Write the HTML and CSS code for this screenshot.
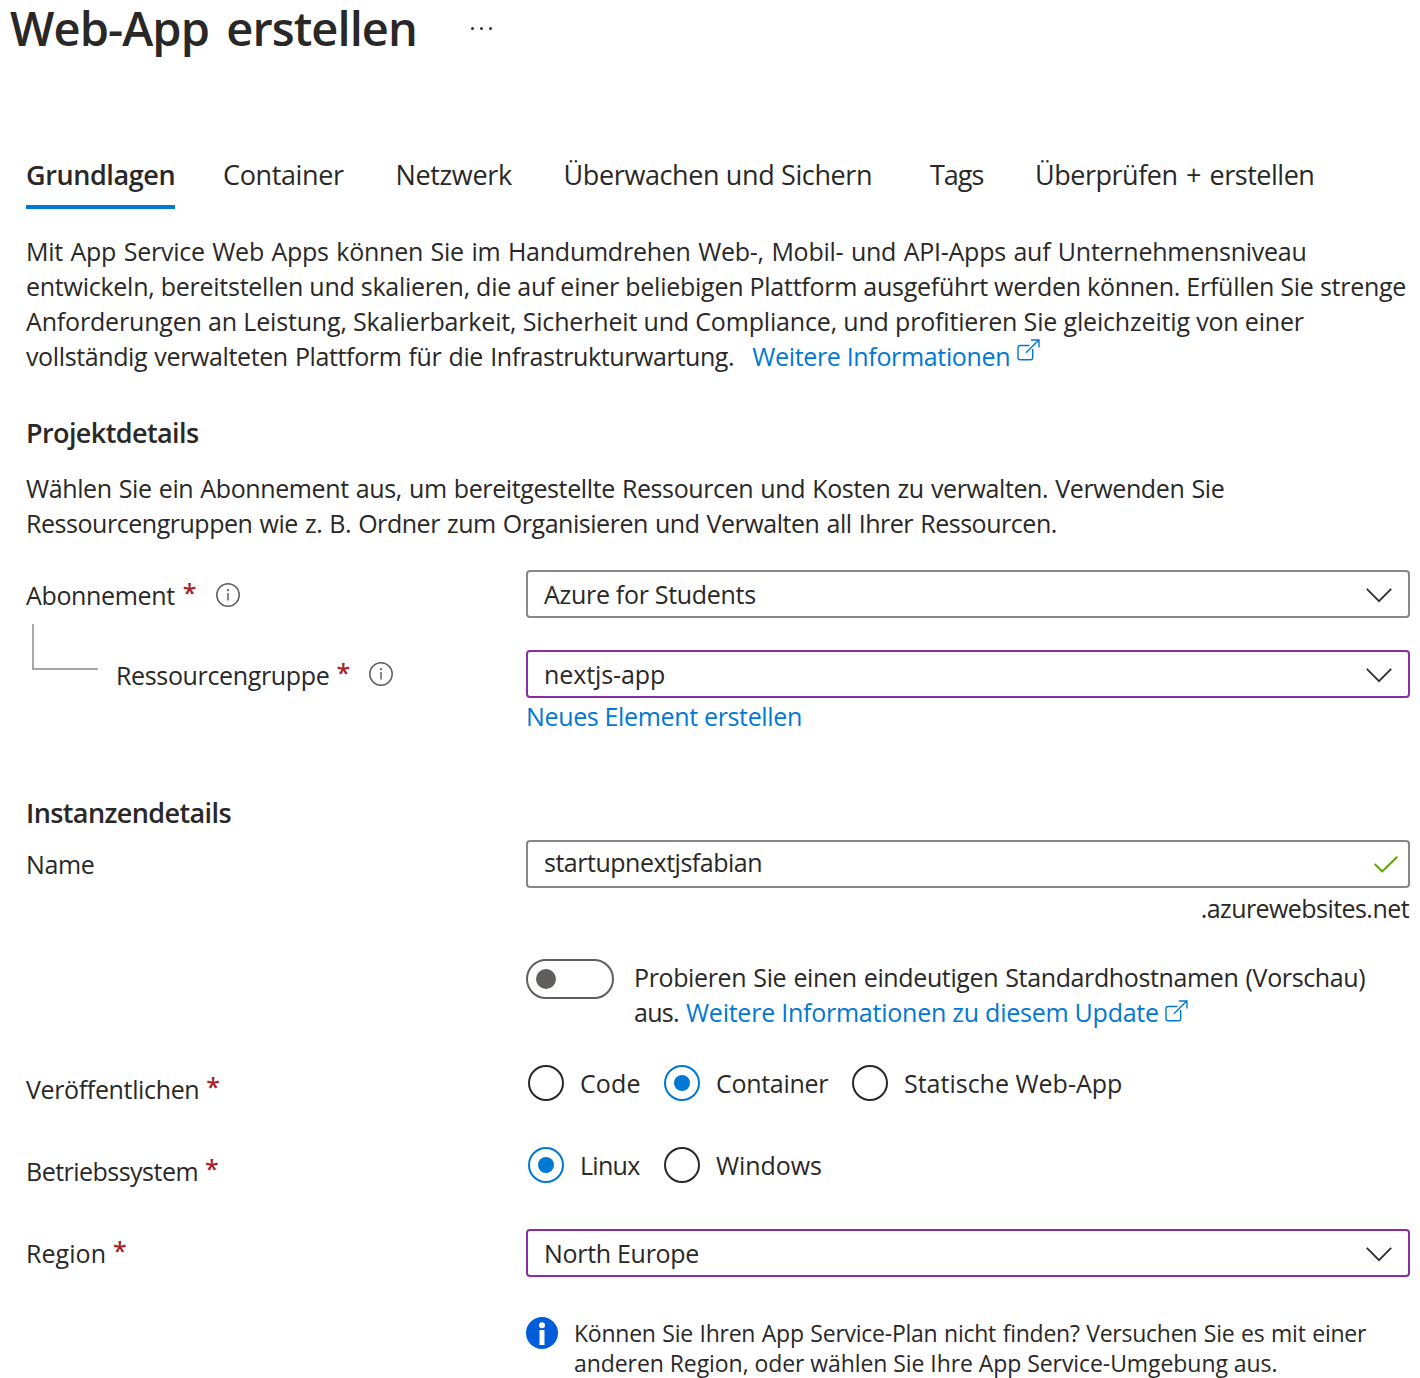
FILE: index.html
```
<!DOCTYPE html>
<html lang="de">
<head>
<meta charset="utf-8">
<title>Web-App erstellen</title>
<link rel="stylesheet" href="styles.css">
</head>
<body>
<svg class="defs" width="0" height="0">
  <symbol id="info" viewBox="0 0 24 24"><circle cx="12" cy="12" r="11.2" fill="none" stroke="#605e5c" stroke-width="1.5"/><path d="M12 10v7.6" stroke="#605e5c" stroke-width="1.5"/><circle cx="12" cy="7.2" r="1.1" fill="#605e5c"/></symbol>
  <symbol id="chevron" viewBox="0 0 26 15"><path d="M.8 .9 13 13.2 25.200 .9" fill="none" stroke="#323130" stroke-width="1.9"/></symbol>
  <symbol id="external" viewBox="0 0 23 22"><path d="M12.500 6.500H3.200Q1 6.500 1 8.700V18.500Q1 20.700 3.200 20.700H13.500Q15.700 20.700 15.700 18.500V10M9 13.800 21.500 1.300M14 1H22V8.500" fill="none" stroke="#0078d4" stroke-width="1.4"/></symbol>
</svg>
<header class="top">
  <h1>Web-App erstellen</h1>
  <span class="more"><i></i><i></i><i></i></span>
</header>
<main>
  <nav class="tabs">
    <a class="tab active">Grundlagen</a>
    <a class="tab tab-container">Container</a>
    <a class="tab tab-network">Netzwerk</a>
    <a class="tab tab-monitor">Überwachen und Sichern</a>
    <a class="tab tab-tags">Tags</a>
    <a class="tab tab-review">Überprüfen + erstellen</a>
  </nav>
  <p class="intro">
    <span class="line i1">Mit App Service Web Apps können Sie im Handumdrehen Web-, Mobil- und API-Apps auf Unternehmensniveau</span>
    <span class="line i2">entwickeln, bereitstellen und skalieren, die auf einer beliebigen Plattform ausgeführt werden können. Erfüllen Sie strenge</span>
    <span class="line i3">Anforderungen an Leistung, Skalierbarkeit, Sicherheit und Compliance, und profitieren Sie gleichzeitig von einer</span>
    <span class="line last"><span class="i4">vollständig verwalteten Plattform für die Infrastrukturwartung.</span><a class="link more-info">Weitere Informationen</a><svg class="ext"><use href="#external"/></svg></span>
  </p>
  <h2 class="project">Projektdetails</h2>
  <p class="project-text">
    <span class="line p1">Wählen Sie ein Abonnement aus, um bereitgestellte Ressourcen und Kosten zu verwalten. Verwenden Sie</span>
    <span class="line p2">Ressourcengruppen wie z. B. Ordner zum Organisieren und Verwalten all Ihrer Ressourcen.</span>
  </p>
  <div class="row subscription">
    <div class="label"><span>Abonnement</span><b class="req">*</b><svg class="info"><use href="#info"/></svg></div>
    <div class="select"><span>Azure for Students</span><svg class="chev"><use href="#chevron"/></svg></div>
  </div>
  <div class="row group">
    <div class="nested"><i class="branch"></i><div class="label"><span>Ressourcengruppe</span><b class="req">*</b><svg class="info"><use href="#info"/></svg></div></div>
    <div>
      <div class="select changed"><span class="group-value">nextjs-app</span><svg class="chev"><use href="#chevron"/></svg></div>
      <a class="link create">Neues Element erstellen</a>
    </div>
  </div>
  <h2 class="instance">Instanzendetails</h2>
  <div class="row name">
    <div class="label"><span>Name</span></div>
    <div>
      <div class="select input"><span>startupnextjsfabian</span><svg class="check" viewBox="0 0 24 17"><path d="M.7 8 8.200 15.400 23.300 .8" fill="none" stroke="#57a300" stroke-width="1.9"/></svg></div>
      <div class="suffix">.azurewebsites.net</div>
    </div>
  </div>
  <div class="row host">
    <div></div>
    <div class="host-field">
      <span class="toggle"><i></i></span>
      <div><span class="line h1-line">Probieren Sie einen eindeutigen Standardhostnamen (Vorschau)</span><span class="line last"><span class="aus">aus.</span><a class="link update">Weitere Informationen zu diesem Update</a><svg class="ext"><use href="#external"/></svg></span></div>
    </div>
  </div>
  <div class="row publish">
    <div class="label"><span>Veröffentlichen</span><b class="req">*</b></div>
    <div class="radios">
      <div class="radio"><i></i><span class="code">Code</span></div>
      <div class="radio on"><i></i><span>Container</span></div>
      <div class="radio"><i></i><span class="static">Statische Web-App</span></div>
    </div>
  </div>
  <div class="row os">
    <div class="label"><span>Betriebssystem</span><b class="req">*</b></div>
    <div class="radios">
      <div class="radio on"><i></i><span class="linux">Linux</span></div>
      <div class="radio"><i></i><span class="windows">Windows</span></div>
    </div>
  </div>
  <div class="row region">
    <div class="label"><span>Region</span><b class="req">*</b></div>
    <div class="select changed"><span class="region-value">North Europe</span><svg class="chev"><use href="#chevron"/></svg></div>
  </div>
  <div class="row hint">
    <div></div>
    <div class="hint-field">
      <svg class="badge" viewBox="0 0 32 32"><circle cx="16" cy="16" r="16" fill="#015cda"/><circle cx="16" cy="8.200" r="3" fill="#fff"/><path d="M13.500 13h5v15h-5z" fill="#fff"/></svg>
      <div class="hint-text"><span class="line t1">Können Sie Ihren App Service-Plan nicht finden? Versuchen Sie es mit einer</span><span class="line t2">anderen Region, oder wählen Sie Ihre App Service-Umgebung aus.</span></div>
    </div>
  </div>
</main>
</body>
</html>
```
FILE: styles.css
```
* { box-sizing: border-box; }
body { margin: 0; height: 1378px; overflow: hidden; background: #fff; color: #292827; font: 25px/35px "Open Sans", "Noto Sans", sans-serif; letter-spacing: -0.3px; }
.defs { display: block; }
h1, h2, p { margin: 0; }
svg { display: block; flex: none; }
.line { display: block; white-space: nowrap; }
.line.last { display: flex; }

.top { display: flex; height: 54px; padding-left: 10px; }
h1 { width: 406px; font-size: 47px; line-height: 56px; font-weight: 600; letter-spacing: -0.93px; word-spacing: 6px; white-space: nowrap; }
.more { display: flex; gap: 6px; margin: 27px 0 0 55px; }
.more i { width: 3px; height: 3px; border-radius: 50%; background: #323130; }

main { padding: 102px 10px 0 26px; }
.tabs { display: grid; grid-template-columns: 197px 172.500px 168px 366.500px 105px auto; justify-items: start; font-size: 27px; line-height: 36px; }
.tab { height: 53px; padding-top: 1px; white-space: nowrap; }
.active { width: 149px; border-bottom: 4px solid #0078d4; font-weight: 600; letter-spacing: -0.4px; }
.tab-container { letter-spacing: -0.37px; }
.tab-network { letter-spacing: -0.35px; }
.tab-monitor { letter-spacing: -0.38px; }
.tab-tags { letter-spacing: -1px; }
.tab-review { letter-spacing: -0.48px; word-spacing: 2px; }

.intro { margin-top: 25px; }
.i1 { letter-spacing: -0.25px; word-spacing: 1.300px; }
.i2 { letter-spacing: -0.253px; }
.i3 { letter-spacing: -0.17px; }
.i4 { letter-spacing: -0.375px; word-spacing: 1px; }
.link { color: #0078d4; }
.more-info { margin-left: 18px; letter-spacing: -0.339px; }
.ext { width: 23px; height: 22px; margin-left: 7px; }
h2 { font-size: 27px; line-height: 36px; font-weight: 600; letter-spacing: -0.6px; }
.project { margin-top: 41px; }
.project-text { margin-top: 20px; }
.p1 { letter-spacing: -0.39px; word-spacing: 1px; }
.p2 { letter-spacing: -0.46px; word-spacing: 1px; }

.row { display: grid; grid-template-columns: 500px 884px; }
.label { display: flex; padding-top: 8px; letter-spacing: -0.35px; }
.req { width: 12px; margin: -3px 0 0 8px; color: #a4262c; font-weight: 600; letter-spacing: 0; }
.info { width: 24px; height: 24px; margin: 5px 0 0 21px; }
.select { display: flex; align-items: center; justify-content: space-between; height: 48px; padding: 0 16px; border: 2px solid #8a8886; border-radius: 4px; }
.changed { border-color: #8a2da5; }
.chev { width: 26px; height: 15px; margin-top: 2px; }
.subscription { height: 48px; margin-top: 29px; }
.group { height: 84px; margin-top: 32px; }
.nested { display: flex; }
.branch { width: 66px; height: 46px; margin: -26px 18px 0 6px; border: solid #a6a6a6; border-width: 0 0 2px 2px; }
.nested .req { margin-left: 7px; }
.nested .info { margin-top: 4px; }
.group-value { letter-spacing: -0.1px; }
.create { display: block; margin-top: 1px; letter-spacing: -0.345px; }
.instance { margin-top: 61px; }
.name { height: 86px; margin-top: 9px; }
.name .label { padding-top: 7px; }
.input { padding-right: 10px; letter-spacing: -0.48px; }
.input span { padding-bottom: 3px; }
.check { width: 24px; height: 17px; }
.suffix { margin: 3px 1px 0 0; text-align: right; letter-spacing: -0.559px; }

.host { margin-top: 33px; }
.host-field { display: flex; gap: 20px; }
.host-field > div { padding-top: 1px; }
.host .ext { margin: 5px 0 0 6px; }
.toggle { display: flex; align-items: center; width: 88px; height: 40px; padding-left: 8px; border: 2px solid #605e5c; border-radius: 20px; }
.toggle i { width: 20px; height: 20px; border-radius: 50%; background: #605e5c; }
.h1-line { letter-spacing: -0.37px; word-spacing: 1px; }
.aus { width: 52px; letter-spacing: -0.7px; }
.update { letter-spacing: -0.243px; }

.publish { margin-top: 35px; height: 82px; }
.os { height: 82px; }
.publish .label, .os .label, .region .label { padding-top: 7px; }
.publish .req, .os .req { margin-left: 7px; }
.os .label { letter-spacing: -0.52px; }
.region .label { letter-spacing: 0.05px; }
.region .req { margin-left: 7px; }
.radios { display: grid; grid-template-columns: 136px 188px auto; padding-left: 2px; }
.radio { display: flex; gap: 16px; white-space: nowrap; }
.radio i { display: grid; place-items: center; width: 36px; height: 36px; border: 2px solid #292827; border-radius: 50%; }
.radio span { padding-top: 1px; }
.on i { border-color: #0078d4; }
.on i::after { content: ""; width: 16px; height: 16px; border-radius: 50%; background: #0078d4; }
.code { letter-spacing: 0.1px; }
.static { letter-spacing: 0; }
.linux { letter-spacing: -0.7px; }
.windows { letter-spacing: -0.07px; }
.region-value { letter-spacing: -0.3px; }
.hint { margin-top: 40px; }
.hint-field { display: flex; gap: 16px; }
.badge { width: 32px; height: 32px; }
.hint-text { padding-top: 1px; font-size: 23px; line-height: 30px; }
.t1 { letter-spacing: -0.25px; word-spacing: 0.900px; }
.t2 { letter-spacing: -0.07px; }
```
